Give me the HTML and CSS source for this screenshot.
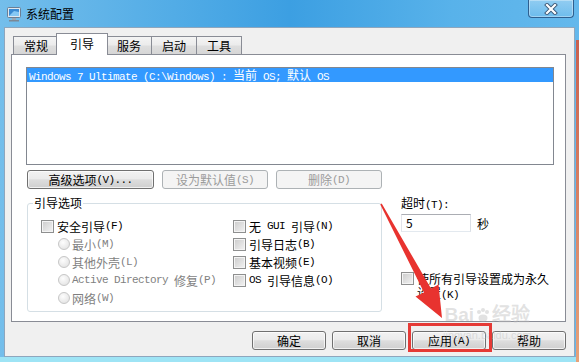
FILE: index.html
```html
<!DOCTYPE html>
<html lang="zh-CN">
<head>
    <meta charset="UTF-8">
    <title>系统配置</title>
    <link rel="stylesheet" href="styles.css">
</head>
<body>
<div class="window">
    <div class="titlebar">
        <svg class="app-icon" width="16" height="16" viewBox="0 0 16 16">
            <rect x="1.5" y="1.5" width="13" height="10" rx="1" fill="#dfe8f0" stroke="#6b7f95"/>
            <rect x="3" y="3" width="10" height="7" fill="#3a8ad2"/>
            <path d="M3 10 L8 5 L13 6 L13 10 Z" fill="#86c8f4"/>
            <rect x="6" y="12" width="4" height="2" fill="#9aa7b3"/>
            <rect x="3" y="14" width="10" height="1.5" fill="#7b8896"/>
        </svg>
        <span class="title">系统配置</span>
        <div class="close">
            <svg width="14" height="12" viewBox="0 0 14 12">
                <path d="M3 2 L11 10 M11 2 L3 10" stroke="#3b5877" stroke-width="4" stroke-linecap="square"/>
                <path d="M3 2 L11 10 M11 2 L3 10" stroke="#fff" stroke-width="2.2" stroke-linecap="square"/>
            </svg>
        </div>
    </div>

    <div class="client">
        <div class="tabs">
            <div class="tab">常规</div>
            <div class="tab active">引导</div>
            <div class="tab">服务</div>
            <div class="tab">启动</div>
            <div class="tab">工具</div>
        </div>

        <div class="panel">
            <div class="oslist">
                <div class="os-item"><span class="m">Windows 7 Ultimate (C:\Windows) :&nbsp;</span>当前<span class="m">&nbsp;OS;&nbsp;</span>默认<span class="m">&nbsp;OS</span></div>
            </div>

            <div class="btnrow">
                <div class="btn wide">高级选项<span class="m">(V)...</span></div>
                <div class="btn mid disabled">设为默认值<span class="m">(S)</span></div>
                <div class="btn mid disabled">删除<span class="m">(D)</span></div>
            </div>

            <div class="lower">
                <fieldset class="group">
                    <legend>引导选项</legend>
                    <div class="group-body">
                        <div class="col first">
                            <div class="row"><span class="cb"></span>安全引导<span class="m">(F)</span></div>
                            <div class="row sub off"><span class="radio"></span>最小<span class="m">(M)</span></div>
                            <div class="row sub off"><span class="radio"></span>其他外壳<span class="m">(L)</span></div>
                            <div class="row sub off"><span class="radio"></span><span class="m">Active Directory&nbsp;</span>修复<span class="m">(P)</span></div>
                            <div class="row sub off"><span class="radio"></span>网络<span class="m">(W)</span></div>
                        </div>
                        <div class="col">
                            <div class="row"><span class="cb"></span>无<span class="m">&nbsp;GUI&nbsp;</span>引导<span class="m">(N)</span></div>
                            <div class="row"><span class="cb"></span>引导日志<span class="m">(B)</span></div>
                            <div class="row"><span class="cb"></span>基本视频<span class="m">(E)</span></div>
                            <div class="row"><span class="cb"></span><span class="m">OS&nbsp;</span>引导信息<span class="m">(O)</span></div>
                        </div>
                    </div>
                </fieldset>

                <div class="side">
                    <div class="side-label">超时<span class="m">(T):</span></div>
                    <div class="timeout">
                        <div class="textbox">5</div>
                        <span class="unit">秒</span>
                    </div>
                    <div class="perm">
                        <span class="cb"></span>
                        <span class="perm-text">使所有引导设置成为永久设置<span class="m">(K)</span></span>
                    </div>
                </div>
            </div>
        </div>

        <div class="footer">
            <div class="btn foot">确定</div>
            <div class="btn foot">取消</div>
            <div class="btn foot">应用<span class="m">(A)</span></div>
            <div class="btn foot">帮助</div>
        </div>
    </div>

    <!-- annotation overlays -->
    <div class="watermark">
        <span class="wm-big">Bai<svg width="16" height="16" viewBox="0 0 16 16"><circle cx="4" cy="5" r="2" /><circle cx="8" cy="3" r="2"/><circle cx="12" cy="5" r="2"/><ellipse cx="8" cy="11" rx="4.5" ry="3.5"/></svg>经验</span>
        <span class="wm-small">jingyan.baidu.com</span>
    </div>
    <div class="highlight"></div>
    <svg class="arrow" width="579" height="362" viewBox="0 0 579 362">
        <polygon points="381.7,203.6 431,288.5 438.5,284.4 442,318 415.5,296.6 424,292.5 380.3,204.4" fill="#e8332f"/>
    </svg>
</div>
</body>
</html>
```

FILE: styles.css
```css
body {
    margin: 0;
    font-family: "Noto Sans CJK SC", "Liberation Sans", sans-serif;
    font-size: 12px;
    color: #000;
}
.window {
    position: relative;
    width: 579px;
    height: 362px;
    overflow: hidden;
    background:
        linear-gradient(#c9604e, #e6a27a) 576px 40px / 3px 322px no-repeat,
        linear-gradient(to bottom, transparent 357px, #9ee4f5 357px),
        linear-gradient(90deg, #74beeb 0%, #52ace6 30%, #3c9fe2 50%, #58b2ea 78%, #64b8ec 100%);
}
.titlebar {
    height: 27px;
    display: flex;
    align-items: center;
    padding-left: 6px;
}
.title {
    margin-left: 4px;
    line-height: 14px;
}
.close {
    align-self: flex-start;
    margin-left: auto;
    margin-right: 5px;
    width: 46px;
    height: 18px;
    box-sizing: border-box;
    border: 1px solid #2f5f8f;
    border-top: none;
    border-radius: 0 0 4px 4px;
    background: linear-gradient(rgba(255,255,255,0.3), rgba(255,255,255,0.08));
    box-shadow: inset 0 0 0 1px rgba(255,255,255,0.35);
    display: flex;
    align-items: center;
    justify-content: center;
}
.client {
    margin-left: 4px;
    width: 571px;
    height: 330px;
    box-sizing: border-box;
    border: 1px solid #8ea6bd;
    background: #f0f0f0;
    padding: 5px 8px 0 6px;
}
.tabs {
    display: flex;
    align-items: flex-end;
    height: 21px;
    padding-left: 2px;
    position: relative;
    z-index: 1;
}
.tab {
    height: 18px;
    box-sizing: border-box;
    padding: 0 10px;
    border: 1px solid #898c95;
    border-bottom: none;
    margin-right: -1px;
    background: linear-gradient(#f4f4f4 0%, #ececec 45%, #dedede 55%, #d6d6d6 100%);
    line-height: 17px;
}
.tab.active {
    height: 22px;
    margin: 0 -2px -1px -2px;
    padding: 0 13px;
    background: #fff;
    line-height: 20px;
    position: relative;
}
.panel {
    height: 268px;
    box-sizing: border-box;
    border: 1px solid #898c95;
    background: #fff;
}
.m {
    font-family: "Liberation Mono", monospace;
    font-size: 11px;
    letter-spacing: -0.6px;
}
.oslist {
    margin: 12px 0 0 14px;
    width: 528px;
    height: 98px;
    box-sizing: border-box;
    border: 1px solid #828790;
}
.os-item {
    height: 14px;
    line-height: 14px;
    padding-left: 2px;
    background: #3399ff;
    color: #fff;
    white-space: nowrap;
}
.btnrow {
    display: flex;
    gap: 8px;
    margin: 5px 0 0 15px;
}
.btn {
    height: 19px;
    box-sizing: border-box;
    border: 1px solid #707070;
    border-radius: 3px;
    background: linear-gradient(#f2f2f2, #ebebeb 45%, #dddddd 52%, #cfcfcf);
    box-shadow: inset 0 0 0 1px rgba(255,255,255,0.7);
    display: flex;
    align-items: center;
    justify-content: center;
    line-height: 14px;
    white-space: nowrap;
}
.btn.wide { width: 127px; }
.btn.mid { width: 106px; }
.btn.disabled {
    border-color: #adb2b5;
    background: #f4f4f4;
    box-shadow: none;
    color: #9b9b9b;
}
.lower {
    display: flex;
    align-items: flex-start;
    margin: 7px 0 0 15px;
}
.group {
    margin: 0;
    width: 355px;
    height: 116px;
    box-sizing: border-box;
    border: 1px solid #d5dfe5;
    border-radius: 3px;
    padding: 0 0 0 13px;
}
.group legend {
    margin-left: -8px;
    padding: 0 1px;
    line-height: 14px;
}
.group-body {
    display: flex;
    margin-top: 7px;
}
.col.first { width: 192px; }
.row {
    height: 18px;
    display: flex;
    align-items: center;
    white-space: nowrap;
}
.row.sub { padding-left: 17px; }
.row.off { color: #7f7f7f; }
.cb {
    flex: none;
    width: 13px;
    height: 13px;
    box-sizing: border-box;
    border: 1px solid #8e8f8f;
    background: linear-gradient(135deg, #cbcbcb, #f3f3f3);
    box-shadow: inset 0 0 0 1px #f4f4f4;
    margin-right: 3px;
}
.radio {
    flex: none;
    width: 12px;
    height: 12px;
    box-sizing: border-box;
    border: 1px solid #c6c6c6;
    border-radius: 50%;
    background: radial-gradient(circle at 40% 35%, #fdfdfd, #dedede);
    margin-right: 2px;
}
.side {
    margin-left: 19px;
    width: 154px;
}
.side-label { line-height: 14px; }
.timeout {
    display: flex;
    align-items: center;
    margin-top: 2px;
}
.textbox {
    width: 70px;
    height: 18px;
    box-sizing: border-box;
    border: 1px solid;
    border-color: #abadb3 #dbdfe6 #e3e9ef #e2e3ea;
    padding-left: 4px;
    line-height: 16px;
}
.unit { margin-left: 6px; }
.perm {
    display: flex;
    align-items: flex-start;
    margin-top: 40px;
    line-height: 14px;
}
.footer {
    display: flex;
    justify-content: flex-end;
    gap: 6px;
    margin-top: 9px;
}
.btn.foot { width: 74px; }

.watermark {
    position: absolute;
    left: 443px;
    top: 304px;
    display: flex;
    flex-direction: column;
    align-items: center;
    color: rgba(190, 190, 190, 0.45);
    pointer-events: none;
}
.wm-big {
    display: flex;
    align-items: center;
    font-family: "Liberation Sans", sans-serif;
    font-size: 19px;
    font-weight: bold;
    line-height: 22px;
}
.wm-big svg { fill: rgba(190, 190, 190, 0.45); margin: 0 1px; }
.wm-small {
    font-family: "Liberation Sans", sans-serif;
    font-size: 11px;
    line-height: 13px;
    margin-top: 3px;
}
.highlight {
    position: absolute;
    left: 408px;
    top: 323px;
    width: 84px;
    height: 29px;
    box-sizing: border-box;
    border: 3px solid #e53a36;
}
.arrow {
    position: absolute;
    left: 0;
    top: 0;
    pointer-events: none;
}
```
